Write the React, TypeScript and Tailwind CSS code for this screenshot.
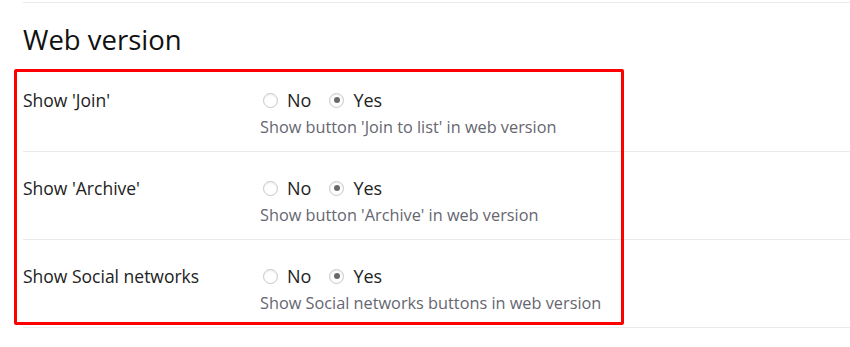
import React from 'react'

type Setting = {
  label: string
  help: string
}

const settings: Setting[] = [
  { label: "Show 'Join'", help: "Show button 'Join to list' in web version" },
  { label: "Show 'Archive'", help: "Show button 'Archive' in web version" },
  { label: 'Show Social networks', help: 'Show Social networks buttons in web version' },
]

const Radio: React.FC<{ checked?: boolean; label: string }> = ({ checked, label }) => {
  return (
    <label className="flex items-center gap-[9px] cursor-pointer">
      <span className="w-[15px] h-[15px] rounded-full border border-[#c8c8c8] bg-white flex items-center justify-center shadow-[inset_0_1px_2px_rgba(0,0,0,0.08)]">
        {checked && <span className="w-[6px] h-[6px] rounded-full bg-[#6a6a6a]" />}
      </span>
      <span className="text-[18px] text-[#222]">{label}</span>
    </label>
  )
}

const SettingRow: React.FC<{ data: Setting }> = ({ data }) => {
  return (
    <div className="flex h-[88px] border-b border-[#ebebeb] pt-[24px]">
      <div className="w-[237px] shrink-0 text-[17.5px] leading-[24px] text-[#222]">{data.label}</div>
      <div className="flex flex-col">
        <div className="flex items-center gap-[18px] h-[24px] pl-[3px]">
          <Radio label="No" />
          <Radio label="Yes" checked />
        </div>
        <div className="mt-[3px] text-[16.3px] leading-[24px] text-[#666670]">{data.help}</div>
      </div>
    </div>
  )
}

export default function App() {
  return (
    <div className="w-[850px] h-[347px] bg-white relative overflow-hidden" style={{ fontFamily: '"Open Sans", sans-serif' }}>
      <div className="pl-[23px]">
        <div className="h-[3px] border-b border-[#ebebeb]" />
        <h2 className="text-[27.5px] leading-[36px] text-[#111] mt-[19px] mb-[6px]">Web version</h2>
        {settings.map((s) => (
          <SettingRow key={s.label} data={s} />
        ))}
      </div>
      <div className="absolute left-[14px] top-[69px] w-[610px] h-[256px] border-[3px] border-[#ff0000] rounded-[2px] pointer-events-none" />
    </div>
  )
}
